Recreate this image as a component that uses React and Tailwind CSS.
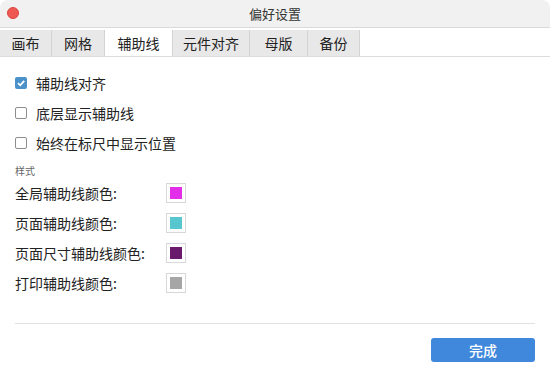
import React from "react";

const tabs = [
  { name: "画布", w: "w-[52px]" },
  { name: "网格", w: "w-[53px]" },
  { name: "辅助线", w: "w-[68px]", active: true },
  { name: "元件对齐", w: "w-[77px]" },
  { name: "母版", w: "w-[58px]" },
  { name: "备份", w: "w-[52px]" },
];

const options = [
  { label: "辅助线对齐", checked: true },
  { label: "底层显示辅助线", checked: false },
  { label: "始终在标尺中显示位置", checked: false },
];

const colors = [
  { label: "全局辅助线颜色:", color: "bg-[#e22ee8]" },
  { label: "页面辅助线颜色:", color: "bg-[#57c6cf]" },
  { label: "页面尺寸辅助线颜色:", color: "bg-[#6a1a6c]" },
  { label: "打印辅助线颜色:", color: "bg-[#a6a6a6]" },
];

const Checkbox = ({ checked }) =>
  checked ? (
    <div className="w-[12px] h-[12px] rounded-[2px] bg-[#4a92c9] flex items-center justify-center">
      <svg width="10" height="10" viewBox="0 0 10 10">
        <path d="M2 5.2 L4.2 7.3 L8.2 2.8" fill="none" stroke="white" strokeWidth="1.8" />
      </svg>
    </div>
  ) : (
    <div className="w-[12px] h-[12px] rounded-[2px] border border-[#8d8d8d] bg-white" />
  );

export default function App() {
  return (
    <div
      className="w-[550px] h-[378px] bg-white overflow-hidden rounded-[8px] flex flex-col text-[#222]"
      style={{ fontFamily: '"Noto Sans CJK SC", "Noto Sans", sans-serif' }}
    >
      {/* title bar */}
      <div className="h-[28px] bg-[#f1f1f1] border-b border-[#dadada] flex items-center relative shrink-0">
        <div className="absolute left-[7px] top-[7px] w-[12px] h-[12px] rounded-full bg-[#ee5a52] border border-[#d9463e]" />
        <div className="flex-1 text-center text-[13px] text-[#333] leading-none">偏好设置</div>
      </div>

      {/* tabs */}
      <div className="mt-[2px] h-[27px] flex border-b border-[#dcdcdc] shrink-0">
        {tabs.map((t) => (
          <div
            key={t.name}
            className={`${t.w} flex items-center justify-center text-[14px] border-r border-[#d3d3d3] ${
              t.active ? "bg-white" : "bg-[#e8e8e8]"
            }`}
          >
            {t.name}
          </div>
        ))}
      </div>

      <div className="px-[15px] pt-[16px] flex flex-col">
        <div className="flex flex-col gap-[10px]">
          {options.map((o) => (
            <div key={o.label} className="h-[20px] flex items-center gap-[9px] text-[14px]">
              <Checkbox checked={o.checked} />
              <span>{o.label}</span>
            </div>
          ))}
        </div>

        <div className="mt-[13px] text-[10px] text-[#666] leading-none">样式</div>

        <div className="mt-[7px] flex flex-col gap-[10px]">
          {colors.map((c) => (
            <div key={c.label} className="h-[20px] flex items-center text-[14px]">
              <span className="w-[151px]">{c.label}</span>
              <div className="w-[20px] h-[20px] border border-[#d8d8d8] bg-white flex items-center justify-center">
                <div className={`w-[12px] h-[12px] ${c.color}`} />
              </div>
            </div>
          ))}
        </div>

        <div className="mt-[30px] h-px bg-[#e2e2e2] w-[520px]" />

        <div className="mt-[14px] flex justify-end">
          <button className="w-[104px] h-[24px] rounded-[3px] bg-[#3f88dc] text-white text-[14px] font-medium flex items-center justify-center">
            完成
          </button>
        </div>
      </div>
    </div>
  );
}
